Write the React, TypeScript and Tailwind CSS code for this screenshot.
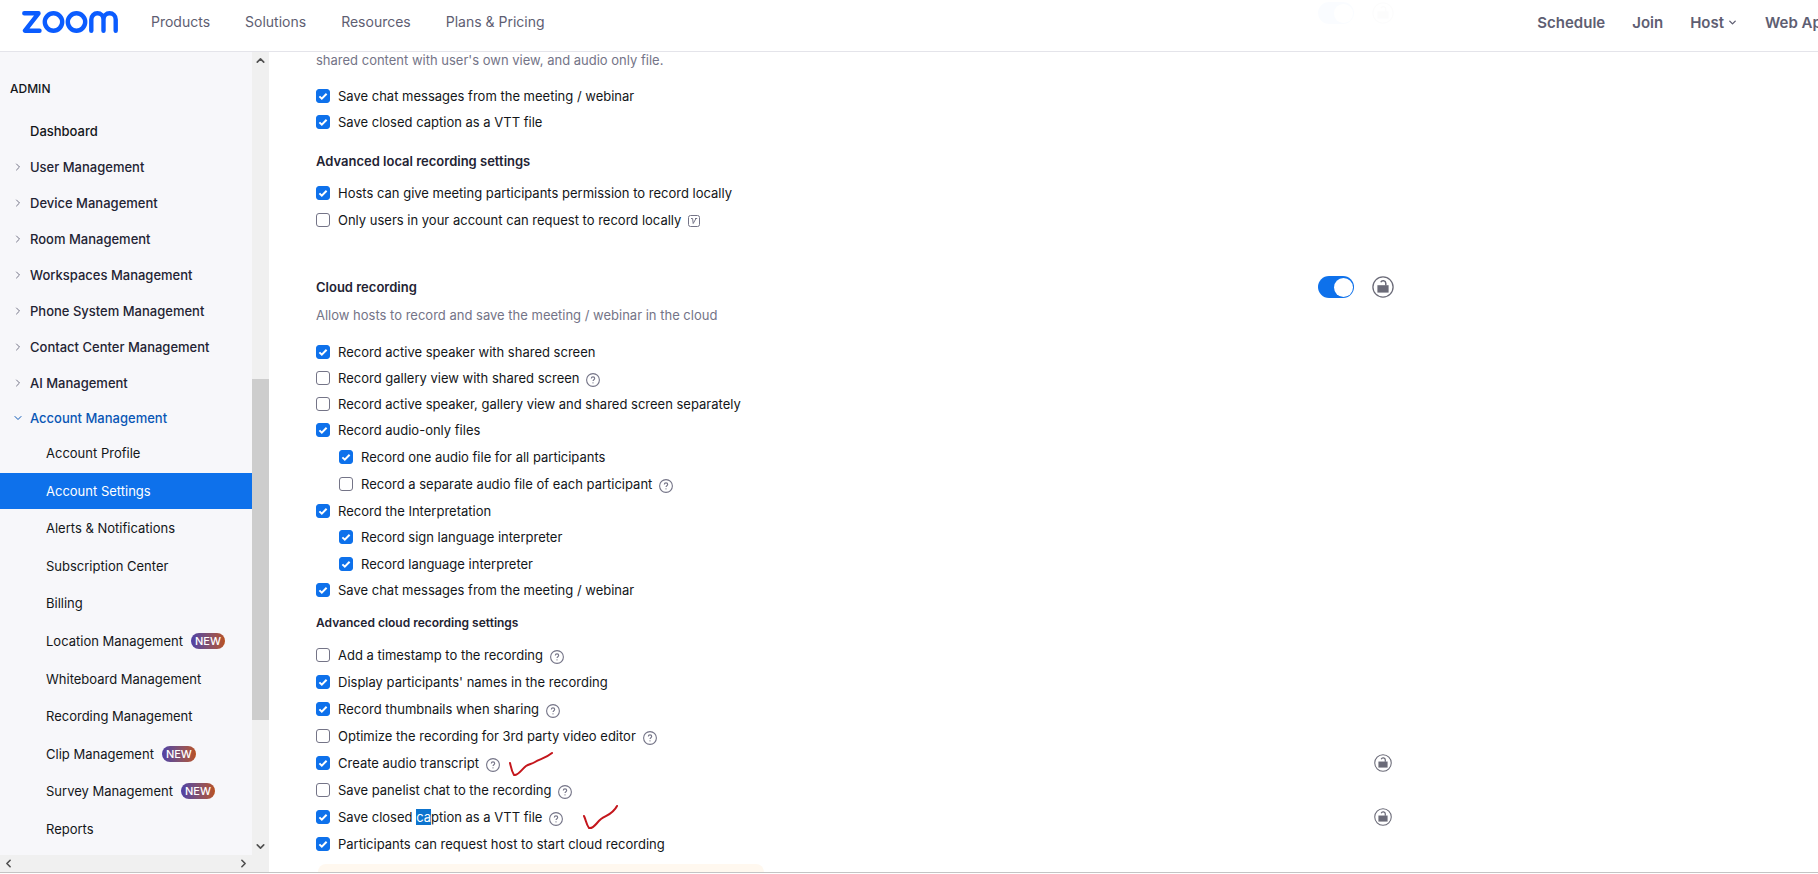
import { useState } from "react";
import type { ReactNode } from "react";
import { ChevronDown, ChevronLeft, ChevronRight, ChevronUp } from "lucide-react";

const productLinks = ["Products", "Solutions", "Resources", "Plans & Pricing"];

const adminSections = [
  "User Management",
  "Device Management",
  "Room Management",
  "Workspaces Management",
  "Phone System Management",
  "Contact Center Management",
  "AI Management",
];

const accountPages: { name: string; active?: boolean; isNew?: boolean }[] = [
  { name: "Account Profile" },
  { name: "Account Settings", active: true },
  { name: "Alerts & Notifications" },
  { name: "Subscription Center" },
  { name: "Billing" },
  { name: "Location Management", isNew: true },
  { name: "Whiteboard Management" },
  { name: "Recording Management" },
  { name: "Clip Management", isNew: true },
  { name: "Survey Management", isNew: true },
  { name: "Reports" },
];

function ZoomLogo() {
  return (
    <svg viewBox="0 0 96 22" className="h-[22px] w-24" fill="none" stroke="#0b5cff" aria-hidden>
      <path
        d="M2.300 2.300H16.500L3 19.700h14.500"
        strokeWidth="4.4"
        strokeLinecap="round"
        strokeLinejoin="round"
      />
      <circle cx="31.500" cy="11" r="8.700" strokeWidth="4.4" />
      <circle cx="54.500" cy="11" r="8.700" strokeWidth="4.4" />
      <path
        d="M69.300 19.700V8.500a6.100 6.200 0 0 1 12.200 0v11.200M81.500 8.500a6.100 6.200 0 0 1 12.200 0v11.200"
        strokeWidth="4.4"
        strokeLinecap="round"
      />
    </svg>
  );
}

function HelpButton() {
  return (
    <button type="button" aria-label="Help" className="shrink-0 text-[#747487]">
      <svg viewBox="0 0 14 14" className="mt-[3px] size-3.5" fill="none" stroke="currentColor">
        <circle cx="7" cy="7" r="6.4" strokeWidth="1.1" />
        <path d="M5.3 5.6c0-1 .7-1.7 1.7-1.7s1.7.7 1.7 1.6c0 1.2-1.7 1.3-1.7 2.6" strokeWidth="1.1" />
        <circle cx="7" cy="9.9" r=".3" strokeWidth=".7" />
      </svg>
    </button>
  );
}

function LockButton({ large = false }: { large?: boolean }) {
  return (
    <button type="button" aria-label="Lock setting" className="flex w-[22px] justify-center text-[#6b6b78]">
      <svg viewBox="0 0 22 22" className={large ? "size-[22px]" : "size-[18px]"} fill="none" stroke="currentColor">
        <circle cx="11" cy="11" r="10.1" strokeWidth="1.3" />
        <path d="M5.4 9.2h11.200v7.400H5.400z" fill="currentColor" stroke="none" />
        <path d="M13.8 9.6V7.200a2.600 2.600 0 0 0-5-.9" strokeWidth="1.5" />
      </svg>
    </button>
  );
}

function Toggle({ label }: { label: string }) {
  const [on, setOn] = useState(true);
  return (
    <button
      type="button"
      role="switch"
      aria-checked={on}
      aria-label={label}
      onClick={() => setOn(!on)}
      className={`flex h-[22px] w-9 items-center rounded-full px-px ${
        on ? "justify-end bg-[#0e71eb]" : "justify-start bg-[#909096]"
      }`}
    >
      <span className="size-[19px] rounded-full bg-white" />
    </button>
  );
}

function Option({
  id,
  checked = false,
  help = false,
  locked = false,
  extra,
  children,
}: {
  id: string;
  checked?: boolean;
  help?: boolean;
  locked?: boolean;
  extra?: ReactNode;
  children: ReactNode;
}) {
  return (
    <div className="flex h-5 items-center">
      <span className="relative mr-2 flex size-[14px] shrink-0">
        <input
          id={id}
          type="checkbox"
          defaultChecked={checked}
          className="peer size-[14px] appearance-none rounded-[3px] border border-[#747487] bg-white checked:border-[#0e71eb] checked:bg-[#0e71eb]"
        />
        <svg
          viewBox="0 0 14 14"
          className="pointer-events-none absolute inset-0 hidden size-[14px] peer-checked:block"
          fill="none"
          stroke="white"
          strokeWidth="2"
          aria-hidden
        >
          <path d="M3.4 7.4l2.4 2.3 4.8-5" />
        </svg>
      </span>
      <label htmlFor={id} className="mr-[7px] whitespace-nowrap">
        {children}
      </label>
      {help && <HelpButton />}
      {extra}
      {locked && (
        <div className="ml-auto">
          <LockButton />
        </div>
      )}
    </div>
  );
}

function Header() {
  return (
    <header className="absolute inset-x-0 top-0 z-10 flex h-[52px] items-center overflow-hidden border-b border-[#e4e4ea] bg-white/98 pb-2 pl-[22px] text-[14px] text-[#5e5e72]">
      <a href="#home" aria-label="Zoom home" className="mr-[33px]">
        <ZoomLogo />
      </a>
      <nav className="flex gap-[35px] whitespace-nowrap">
        {productLinks.map((name) => (
          <a key={name} href="#products">
            {name}
          </a>
        ))}
      </nav>
      <nav className="ml-auto flex gap-[27px] whitespace-nowrap pt-0.5 text-[15px] font-semibold">
        <a href="#schedule">Schedule</a>
        <a href="#join">Join</a>
        <button type="button" className="flex items-center gap-[3px]">
          Host
          <ChevronDown size={11} strokeWidth={3} />
        </button>
        <a href="#webapp" className="w-[53px]">
          Web Ap
        </a>
      </nav>
    </header>
  );
}

function Sidebar() {
  return (
    <aside className="grid h-full w-[269px] shrink-0 grid-cols-[252px_17px] grid-rows-[1fr_17px] bg-[#f7f7fa] pt-[52px]">
      <nav className="overflow-hidden pt-7">
        <h2 className="mb-3.5 pl-[10px] text-[12px] leading-[18px] font-medium text-[#131619]">ADMIN</h2>
        <a href="#dashboard" className="flex h-[37px] items-center pl-[30px] font-medium">
          Dashboard
        </a>
        {adminSections.map((name) => (
          <a key={name} href="#admin" className="flex h-9 items-center pl-3 font-medium text-[#232333]">
            <ChevronRight size={12} className="mr-1.5 text-[#747487]" />
            {name}
          </a>
        ))}
        <a href="#account" className="flex h-[34px] items-center pl-3 font-medium text-[#0956b5]">
          <ChevronDown size={12} className="mr-1.5" />
          Account Management
        </a>
        <ul className="flex h-[412px] flex-col justify-between">
          {accountPages.map((page) => (
            <li key={page.name}>
              <a
                href="#page"
                className={`flex h-9 items-center pl-[46px] ${page.active ? "bg-[#0e71eb] text-white" : ""}`}
              >
                {page.name}
                {page.isNew && (
                  <span className="ml-2 rounded-full bg-linear-to-r from-[#4f3fa5] to-[#b8501b] px-1 text-[11px] leading-4 font-medium text-white">
                    NEW
                  </span>
                )}
              </a>
            </li>
          ))}
        </ul>
      </nav>
      <div className="flex flex-col items-center bg-[#f0f0f0] text-[#505050]">
        <ChevronUp size={13} strokeWidth={3} className="my-0.5 shrink-0" />
        <div className="flex w-full flex-1 flex-col">
          <div className="flex-[310]" />
          <div className="flex-[342] bg-[#cdcdcd]" />
          <div className="flex-[118]" />
        </div>
        <ChevronDown size={13} strokeWidth={3} className="my-0.5 shrink-0" />
      </div>
      <div className="flex items-center justify-between bg-[#f0f0f0] px-0.5 text-[#505050]">
        <ChevronLeft size={13} strokeWidth={3} />
        <ChevronRight size={13} strokeWidth={3} />
      </div>
      <div className="bg-[#f0f0f0]" />
    </aside>
  );
}

export default function App() {
  return (
    <div className="h-screen bg-white pb-px font-['Inter',sans-serif] text-[13px] leading-5 text-[#131619]">
      <div className="relative flex h-full overflow-hidden border-b border-[#c4c4c4]">
        <Header />
        <Sidebar />
        <main className="min-w-0 flex-1 overflow-hidden pl-[47px]">
          <div className="w-full max-w-[1078px]">
            {/* scrolled under the header */}
            <div className="flex justify-end gap-[18px] pt-0.5">
              <Toggle label="Local recording" />
              <LockButton large />
            </div>
            <p className="mt-[26px] text-[#747487]">shared content with user's own view, and audio only file.</p>

            <div className="mt-4 flex flex-col gap-1.5">
              <Option id="local-chat" checked>
                Save chat messages from the meeting / webinar
              </Option>
              <Option id="local-vtt" checked>
                Save closed caption as a VTT file
              </Option>
            </div>

            <h3 className="mt-[19px] font-semibold text-[#232333]">Advanced local recording settings</h3>
            <div className="mt-3 flex flex-col gap-[7px]">
              <Option id="local-permission" checked>
                Hosts can give meeting participants permission to record locally
              </Option>
              <Option
                id="local-account-only"
                extra={
                  <svg viewBox="0 0 12 12" className="mt-0.5 size-3" fill="none" stroke="#747487" aria-hidden>
                    <rect x=".5" y=".5" width="11" height="11" rx="2" />
                    <path d="M3 3.5h1.6l.6 5L8 3.5M7 3.5h2.2" />
                  </svg>
                }
              >
                Only users in your account can request to record locally
              </Option>
            </div>

            <div className="mt-[46px] flex items-center">
              <h3 className="font-semibold text-[#232333]">Cloud recording</h3>
              <div className="ml-auto flex gap-[18px]">
                <Toggle label="Cloud recording" />
                <LockButton large />
              </div>
            </div>
            <p className="mt-[7px] text-[#747487]">Allow hosts to record and save the meeting / webinar in the cloud</p>

            <div className="mt-[17px] flex flex-col gap-1.5">
              <Option id="active-speaker" checked>
                Record active speaker with shared screen
              </Option>
              <Option id="gallery-view" help>
                Record gallery view with shared screen
              </Option>
              <Option id="separately">Record active speaker, gallery view and shared screen separately</Option>
              <Option id="audio-only" checked>
                Record audio-only files
              </Option>
              <div className="my-px flex flex-col gap-[7px] pl-[23px]">
                <Option id="one-audio" checked>
                  Record one audio file for all participants
                </Option>
                <Option id="separate-audio" help>
                  Record a separate audio file of each participant
                </Option>
              </div>
              <Option id="interpretation" checked>
                Record the Interpretation
              </Option>
              <div className="flex flex-col gap-[7px] pl-[23px]">
                <Option id="sign-language" checked>
                  Record sign language interpreter
                </Option>
                <Option id="language" checked>
                  Record language interpreter
                </Option>
              </div>
              <Option id="cloud-chat" checked>
                Save chat messages from the meeting / webinar
              </Option>
            </div>

            <h4 className="mt-[13px] text-[12px] font-semibold text-[#232333]">Advanced cloud recording settings</h4>
            <div className="mt-3 flex flex-col gap-[7px]">
              <Option id="timestamp" help>
                Add a timestamp to the recording
              </Option>
              <Option id="names" checked>
                Display participants' names in the recording
              </Option>
              <Option id="thumbnails" checked help>
                Record thumbnails when sharing
              </Option>
              <Option id="optimize" help>
                Optimize the recording for 3rd party video editor
              </Option>
              <Option
                id="transcript"
                checked
                help
                locked
                extra={
                  <svg
                    viewBox="0 0 46 26"
                    className="ml-2 h-[26px] w-[46px]"
                    fill="none"
                    stroke="#c4161c"
                    strokeWidth="2"
                    strokeLinecap="round"
                    aria-hidden
                  >
                    <path d="M2 13c1 4 1.500 8 4 12 4 1 8-6 12-9 3-2 6-2 9-4 5-3 11-4 17-9" />
                  </svg>
                }
              >
                Create audio transcript
              </Option>
              <Option id="panelist-chat" help>
                Save panelist chat to the recording
              </Option>
              <Option
                id="cloud-vtt"
                checked
                help
                locked
                extra={
                  <svg
                    viewBox="0 0 36 26"
                    className="ml-5 h-[26px] w-9"
                    fill="none"
                    stroke="#c4161c"
                    strokeWidth="2"
                    strokeLinecap="round"
                    aria-hidden
                  >
                    <path d="M1 12c2 4 2 8 5 12 5 1 7-5 12-9 6-4 12-5 16-13" />
                  </svg>
                }
              >
                Save closed <span className="inline-block bg-[#0d74ce] leading-4 text-white">ca</span>ption as a VTT file
              </Option>
              <Option id="request-start" checked>
                Participants can request host to start cloud recording
              </Option>
            </div>
            <div className="mt-2.5 ml-0.5 h-10 w-[446px] rounded-lg bg-[#fff8ef]" />
          </div>
        </main>
      </div>
    </div>
  );
}
